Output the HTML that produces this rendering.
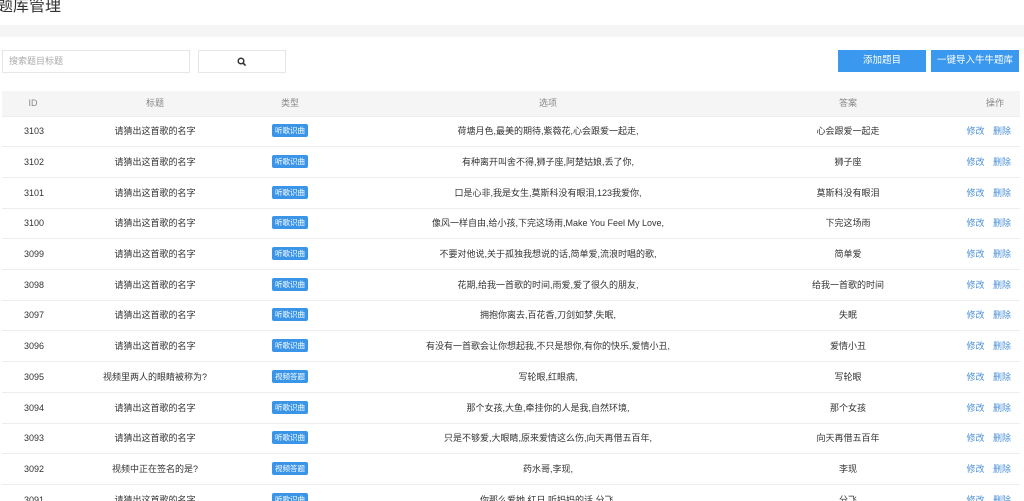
<!DOCTYPE html>
<html><head><meta charset="utf-8"><style>
html,body{margin:0;width:1024px;height:501px;overflow:hidden}
body{background:#fff;font-family:"Liberation Sans","Noto Sans CJK SC",sans-serif;color:#333;position:relative}
.t{position:absolute;left:-3px;top:-5px;font-size:16px;color:#333;line-height:24px}
.band{position:absolute;left:0;top:25px;width:1024px;height:12px;background:#f5f5f5}
.in{position:absolute;left:2px;top:50px;height:21px;border:1px solid #e6e6e6;font-size:9px;color:#aaa;line-height:21px;padding-left:6px;width:180px}
.sb{position:absolute;left:198px;top:50px;width:86px;height:21px;border:1px solid #e6e6e6}
.btn{position:absolute;top:50px;height:22px;width:88px;background:#3a98ef;color:#fff;font-size:9.5px;line-height:22px;text-align:center}
.hd{position:absolute;left:2px;top:91px;width:1018px;height:25px;background:#f5f5f5;border-bottom:1px solid #eee}
.c{position:absolute;top:0;font-size:9px;white-space:nowrap;transform:translateX(-50%);text-align:center}
.hd .c{line-height:25px;color:#888}
.r{position:absolute;left:2px;width:1018px;height:30px;border-bottom:1px solid #eee}
.r .c{line-height:30px}
.r .c.tag{top:8px;line-height:13px;background:#3a95e8;color:#fff;font-size:7.5px;padding:0 3px;border-radius:2px}
.op{position:absolute;right:9px;top:0;line-height:30px;font-size:9px;color:#4a90d9;word-spacing:6px}
</style></head><body>
<div class="t">题库管理</div>
<div class="band"></div>
<div class="in">搜索题目标题</div>
<div class="sb"><svg width="10" height="10" viewBox="0 0 10 10" style="position:absolute;left:38px;top:6px"><circle cx="4" cy="4" r="2.8" fill="none" stroke="#333" stroke-width="1.5"/><path d="M6 6L8.6 8.6" stroke="#333" stroke-width="1.6"/></svg></div>
<div class="btn" style="left:838px">添加题目</div>
<div class="btn" style="left:931px">一键导入牛牛题库</div>
<div class="hd"><span class="c" style="left:31px">ID</span><span class="c" style="left:153px">标题</span><span class="c" style="left:288px">类型</span><span class="c" style="left:546px">选项</span><span class="c" style="left:846px">答案</span><span class="c" style="left:993px">操作</span></div>
<div class="r" style="top:116px"><span class="c" style="left:32px">3103</span><span class="c" style="left:153px">请猜出这首歌的名字</span><span class="c tag" style="left:288px">听歌识曲</span><span class="c" style="left:546px">荷塘月色,最美的期待,紫薇花,心会跟爱一起走,</span><span class="c" style="left:846px">心会跟爱一起走</span><span class="op">修改 删除</span></div>
<div class="r" style="top:146.7px"><span class="c" style="left:32px">3102</span><span class="c" style="left:153px">请猜出这首歌的名字</span><span class="c tag" style="left:288px">听歌识曲</span><span class="c" style="left:546px">有种离开叫舍不得,狮子座,阿楚姑娘,丢了你,</span><span class="c" style="left:846px">狮子座</span><span class="op">修改 删除</span></div>
<div class="r" style="top:177.5px"><span class="c" style="left:32px">3101</span><span class="c" style="left:153px">请猜出这首歌的名字</span><span class="c tag" style="left:288px">听歌识曲</span><span class="c" style="left:546px">口是心非,我是女生,莫斯科没有眼泪,123我爱你,</span><span class="c" style="left:846px">莫斯科没有眼泪</span><span class="op">修改 删除</span></div>
<div class="r" style="top:208.2px"><span class="c" style="left:32px">3100</span><span class="c" style="left:153px">请猜出这首歌的名字</span><span class="c tag" style="left:288px">听歌识曲</span><span class="c" style="left:546px">像风一样自由,给小孩,下完这场雨,Make You Feel My Love,</span><span class="c" style="left:846px">下完这场雨</span><span class="op">修改 删除</span></div>
<div class="r" style="top:238.9px"><span class="c" style="left:32px">3099</span><span class="c" style="left:153px">请猜出这首歌的名字</span><span class="c tag" style="left:288px">听歌识曲</span><span class="c" style="left:546px">不要对他说,关于孤独我想说的话,简单爱,流浪时唱的歌,</span><span class="c" style="left:846px">简单爱</span><span class="op">修改 删除</span></div>
<div class="r" style="top:269.7px"><span class="c" style="left:32px">3098</span><span class="c" style="left:153px">请猜出这首歌的名字</span><span class="c tag" style="left:288px">听歌识曲</span><span class="c" style="left:546px">花期,给我一首歌的时间,雨爱,爱了很久的朋友,</span><span class="c" style="left:846px">给我一首歌的时间</span><span class="op">修改 删除</span></div>
<div class="r" style="top:300.4px"><span class="c" style="left:32px">3097</span><span class="c" style="left:153px">请猜出这首歌的名字</span><span class="c tag" style="left:288px">听歌识曲</span><span class="c" style="left:546px">拥抱你离去,百花香,刀剑如梦,失眠,</span><span class="c" style="left:846px">失眠</span><span class="op">修改 删除</span></div>
<div class="r" style="top:331.1px"><span class="c" style="left:32px">3096</span><span class="c" style="left:153px">请猜出这首歌的名字</span><span class="c tag" style="left:288px">听歌识曲</span><span class="c" style="left:546px">有没有一首歌会让你想起我,不只是想你,有你的快乐,爱情小丑,</span><span class="c" style="left:846px">爱情小丑</span><span class="op">修改 删除</span></div>
<div class="r" style="top:361.8px"><span class="c" style="left:32px">3095</span><span class="c" style="left:153px">视频里两人的眼睛被称为?</span><span class="c tag" style="left:288px">视频答题</span><span class="c" style="left:546px">写轮眼,红眼病,</span><span class="c" style="left:846px">写轮眼</span><span class="op">修改 删除</span></div>
<div class="r" style="top:392.6px"><span class="c" style="left:32px">3094</span><span class="c" style="left:153px">请猜出这首歌的名字</span><span class="c tag" style="left:288px">听歌识曲</span><span class="c" style="left:546px">那个女孩,大鱼,牵挂你的人是我,自然环境,</span><span class="c" style="left:846px">那个女孩</span><span class="op">修改 删除</span></div>
<div class="r" style="top:423.3px"><span class="c" style="left:32px">3093</span><span class="c" style="left:153px">请猜出这首歌的名字</span><span class="c tag" style="left:288px">听歌识曲</span><span class="c" style="left:546px">只是不够爱,大眼睛,原来爱情这么伤,向天再借五百年,</span><span class="c" style="left:846px">向天再借五百年</span><span class="op">修改 删除</span></div>
<div class="r" style="top:454px"><span class="c" style="left:32px">3092</span><span class="c" style="left:153px">视频中正在签名的是?</span><span class="c tag" style="left:288px">视频答题</span><span class="c" style="left:546px">药水哥,李现,</span><span class="c" style="left:846px">李现</span><span class="op">修改 删除</span></div>
<div class="r" style="top:484.8px"><span class="c" style="left:32px">3091</span><span class="c" style="left:153px">请猜出这首歌的名字</span><span class="c tag" style="left:288px">听歌识曲</span><span class="c" style="left:546px">你那么爱她,红日,听妈妈的话,分飞,</span><span class="c" style="left:846px">分飞</span><span class="op">修改 删除</span></div>
</body></html>
